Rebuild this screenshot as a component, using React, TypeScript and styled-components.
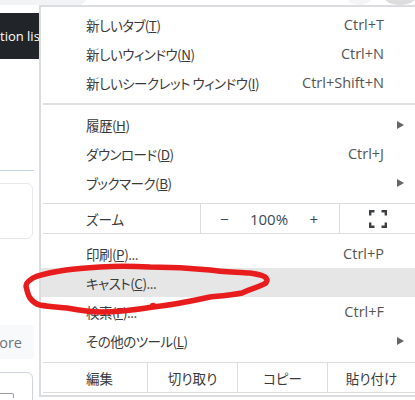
import styled, { createGlobalStyle } from 'styled-components';

const GlobalStyle = createGlobalStyle`
  html, body {
    margin: 0;
    padding: 0;
    background: #fff;
  }

  body {
    width: 415px;
    height: 400px;
    overflow: hidden;
  }
`;

const Page = styled.div`
  position: relative;
  width: 415px;
  height: 400px;
  overflow: hidden;
  background: #fff;
`;

// Browser toolbar leftovers above the menu
const TopStrip = styled.div`
  display: flex;
  height: 5px;
  overflow: hidden;
`;

const StripTab = styled.div`
  width: 88px;
  background: #f1f3f4;
  clip-path: polygon(0 0, 100% 0, 94% 100%, 0 100%);
`;

const StripCircle = styled.div<{ $width: number; $left: number; $color: string }>`
  width: ${({ $width }) => $width}px;
  height: 14px;
  margin-top: -9px;
  margin-left: ${({ $left }) => $left}px;
  border-radius: 50%;
  background: ${({ $color }) => $color};
`;

const Side = styled.div`
  display: flex;
  flex-direction: column;
  width: 39px;
  overflow: hidden;
`;

const DarkBar = styled.div`
  display: flex;
  align-items: center;
  height: 46px;
  margin-top: 8px;
  background: #212529;
  color: #fff;
  font: 400 13px 'Open Sans', sans-serif;
  white-space: nowrap;
`;

const SideLine = styled.div`
  width: 34px;
  height: 1px;
  margin-top: 111px;
  background: #c3d3e2;
`;

const SideCard = styled.div<{ $height: number; $top: number; $border: string }>`
  position: relative;
  width: 44px;
  height: ${({ $height }) => $height}px;
  margin-top: ${({ $top }) => $top}px;
  margin-left: -11px;
  border: 1px solid ${({ $border }) => $border};
  border-radius: 6px;
  box-sizing: border-box;
  flex-shrink: 0;
`;

const MoreButton = styled.div`
  display: flex;
  align-items: center;
  justify-content: flex-end;
  width: 34px;
  height: 34px;
  margin-top: 86px;
  padding-right: 12px;
  box-sizing: border-box;
  border-radius: 0 4px 4px 0;
  background: #f8f9fa;
  color: #6c757d;
  font: 400 14.5px 'Open Sans', sans-serif;
  overflow: hidden;
  flex-shrink: 0;
`;

const CardGlyph = styled.div`
  height: 4px;
  margin-top: 20px;
  margin-left: 8px;
  width: 14px;
  border: 1px solid #9aa0a6;
  border-bottom: none;
  border-radius: 2px 2px 0 0;
`;

const Menu = styled.div`
  position: absolute;
  top: 5px;
  left: 39px;
  width: 378px;
  height: 392px;
  box-sizing: border-box;
  padding-top: 3px;
  border: 2px solid #dadce0;
  background: #fff;
  color: #3a3a3a;
  font: 400 13.5px 'Noto Sans CJK JP', 'Open Sans', sans-serif;
  font-feature-settings: 'palt';
`;

const Row = styled.div<{ $hover?: boolean }>`
  display: flex;
  align-items: center;
  height: 29px;
  padding: 0 10px 0 45px;
  background: ${({ $hover }) => ($hover ? '#e6e6e6' : 'transparent')};
`;

const Label = styled.span`
  flex: 1;
  white-space: nowrap;
  letter-spacing: -0.5px;
`;

const Key = styled.span`
  text-decoration: underline;
  text-underline-offset: 1px;
`;

const Shortcut = styled.span`
  margin-right: 21px;
  color: #555;
  font: 400 14.5px 'Open Sans', sans-serif;
  white-space: nowrap;
`;

const Arrow = styled.span`
  width: 0;
  height: 0;
  margin-right: 1px;
  border-top: 4.5px solid transparent;
  border-bottom: 4.5px solid transparent;
  border-left: 7px solid #666;
`;

const Separator = styled.div`
  height: 2px;
  margin: 6px 0 5px 2px;
  background: #e0e0e0;
`;

const ToolRow = styled.div<{ $top: number; $columns: string }>`
  display: grid;
  grid-template-columns: ${({ $columns }) => $columns};
  height: 31px;
  margin-top: ${({ $top }) => $top}px;
  margin-left: 2px;
  margin-bottom: 5px;
  border-top: 1.5px solid #dcdcdc;
  border-bottom: 1.5px solid #dcdcdc;
  box-sizing: border-box;
`;

const ToolCell = styled.div<{ $first?: boolean }>`
  display: flex;
  align-items: center;
  justify-content: ${({ $first }) => ($first ? 'flex-start' : 'center')};
  padding-left: ${({ $first }) => ($first ? '43px' : '0')};
  border-right: 1.5px solid #dcdcdc;

  &:last-child {
    border-right: none;
  }
`;

const ZoomCell = styled(ToolCell)`
  justify-content: space-between;
  padding: 0 21px 0 19px;
  font: 400 15px 'Open Sans', sans-serif;
  color: #3c4a57;
`;

const Annotation = styled.svg`
  position: absolute;
  top: 0;
  left: 0;
  pointer-events: none;
`;

const rows = {
  first: [
    { label: '新しいタブ', key: 'T', shortcut: 'Ctrl+T' },
    { label: '新しいウィンドウ', key: 'N', shortcut: 'Ctrl+N' },
    { label: '新しいシークレット ウィンドウ', key: 'I', shortcut: 'Ctrl+Shift+N' },
  ],
  second: [
    { label: '履歴', key: 'H', arrow: true },
    { label: 'ダウンロード', key: 'D', shortcut: 'Ctrl+J' },
    { label: 'ブックマーク', key: 'B', arrow: true },
  ],
  third: [
    { label: '印刷', key: 'P', tail: '...', shortcut: 'Ctrl+P' },
    { label: 'キャスト', key: 'C', tail: '...', hover: true },
    { label: '検索', key: 'F', tail: '...', shortcut: 'Ctrl+F' },
    { label: 'その他のツール', key: 'L', arrow: true },
  ],
};

type Item = {
  label: string;
  key: string;
  tail?: string;
  shortcut?: string;
  arrow?: boolean;
  hover?: boolean;
};

const renderRows = (items: Item[]) => items.map(item => (
  <Row key={item.label} $hover={item.hover}>
    <Label>{item.label}(<Key>{item.key}</Key>){item.tail}</Label>
    {item.shortcut && <Shortcut>{item.shortcut}</Shortcut>}
    {item.arrow && <Arrow />}
  </Row>
));

const App = () => {
  return (
    <Page>
      <GlobalStyle />
      <TopStrip>
        <StripTab />
        <StripCircle $width={24} $left={261} $color="#f4f4f4" />
        <StripCircle $width={30} $left={14} $color="#dcdcdc" />
      </TopStrip>
      <Side>
        <DarkBar>tion lis</DarkBar>
        <SideLine />
        <SideCard $height={56} $top={12} $border="#e6e8eb" />
        <MoreButton>ore</MoreButton>
        <SideCard $height={40} $top={13} $border="#ced4da">
          <CardGlyph />
        </SideCard>
      </Side>
      <Menu>
        {renderRows(rows.first)}
        <Separator />
        {renderRows(rows.second)}
        <ToolRow $top={6} $columns="158px 139px 1fr">
          <ToolCell $first>ズーム</ToolCell>
          <ZoomCell>
            <span>−</span>
            <span>100%</span>
            <span>+</span>
          </ZoomCell>
          <ToolCell>
            <svg width="18" height="18" viewBox="0 0 18 18" fill="none" stroke="#3c4043" strokeWidth="2.4">
              <path d="M1.2 5.5V1.2h4.3M12.5 1.2h4.3v4.3M16.8 12.5v4.3h-4.3M5.5 16.8H1.2v-4.3" />
            </svg>
          </ToolCell>
        </ToolRow>
        {renderRows(rows.third)}
        <ToolRow $top={7} $columns="105px 90px 90px 1fr">
          <ToolCell $first>編集</ToolCell>
          <ToolCell>切り取り</ToolCell>
          <ToolCell>コピー</ToolCell>
          <ToolCell>貼り付け</ToolCell>
        </ToolRow>
      </Menu>
      <Annotation width="415" height="400" viewBox="0 0 415 400" fill="none">
        <path
          d="M267 280C266 276 262 275 250 273C240 272 222 272 210 270C190 268 170 267 150 267C130 266 115 266 100 267C85 268 70 269 60 271C48 273 38 275 33 278C28 281 26 283 26 286C27 291 28 295 30 298C33 302 36 304 40 305C50 307 58 307 67 308C78 310 90 312 100 312C118 312 135 310 153 307C172 305 192 301 210 297C220 296 232 295 242 293C250 289 256 288 262 285C265 284 267 283 267 280Z"
          stroke="#e81c1c"
          strokeWidth="5.5"
          strokeLinejoin="round"
        />
        <circle cx="153" cy="306" r="3.2" fill="#e81c1c" />
      </Annotation>
    </Page>
  );
};

export default App;
